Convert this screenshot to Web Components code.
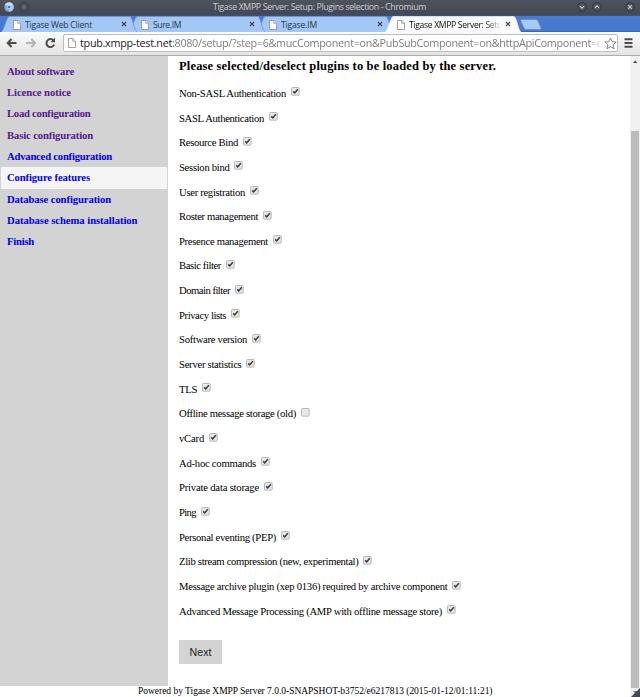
<!DOCTYPE html>
<html lang="en"><head><meta charset="utf-8"><title>Tigase XMPP Server: Setup: Plugins selection</title>
<style>html,body{margin:0;height:100%;overflow:hidden;background:#fff}</style></head>
<body>
<browser-window></browser-window>
<script>
const define = (name, html, setup) => customElements.define(name, class extends HTMLElement {
  connectedCallback() {
    if (this.shadowRoot) return;
    const t = document.createElement('template');
    t.innerHTML = html;
    this.attachShadow({mode: 'open'}).append(t.content.cloneNode(true));
    if (setup) setup.call(this, this.shadowRoot);
  }
});

// A single line of text, tracked so that it fills the width given in "w".
define('fit-text', `<style>:host{display:inline-block;white-space:pre;flex:none}span{display:inline-block}</style><span><slot></slot></span>`, function (r) {
  const w = +this.getAttribute('w'), s = r.querySelector('span');
  const n = this.textContent.length;
  s.style.letterSpacing = (w - s.getBoundingClientRect().width) / n + 'px';
  this.style.width = w + 'px';
});

define('page-icon', `<style>:host{display:block;flex:none;width:8px;height:10px}svg{display:block;width:100%;height:100%}</style>
<svg viewBox="0 0 8 10"><path d="M.5.5H4.8L7.5 3.2V9.5H.5Z" fill="#fff" stroke="#8b8b8b" stroke-width=".8"/><path d="M4.8.5V3.2H7.5" fill="#eee" stroke="#8b8b8b" stroke-width=".8"/></svg>`);

define('window-button', `<style>:host{display:block;width:10px;height:10px}svg{display:block}</style>
<svg width="10" height="10" viewBox="0 0 10 10"><circle cx="5" cy="5" r="4.2" fill="#525661" stroke="#30333c"/><path fill="none" stroke="#c5c9d0" stroke-width="1.1"/></svg>`, function (r) {
  r.querySelector('path').setAttribute('d', {
    down: 'M3 4.2 5 6.2 7 4.2', up: 'M3 5.8 5 3.8 7 5.8', close: 'M3.2 3.2 6.8 6.8M6.8 3.2 3.2 6.8', dot: 'M4.5 5H5.5'
  }[this.getAttribute('kind')]);
});

define('title-bar', `<style>
:host{display:flex;box-sizing:border-box;height:16px;padding:2px 19px 0 4px;background:linear-gradient(#4f535e,#444852 85%,#3d5275);font:8.8px/11px "Open Sans",sans-serif;color:#c9ccd1}
.logo{width:10px;height:10px;margin-right:5px}.t{margin-left:184px}.b{display:flex;margin:0 -14px 0 auto}
.b window-button{margin-left:5px}.b window-button:last-child{margin-left:23px}
</style>
<svg class="logo" viewBox="0 0 10 10"><circle cx="5" cy="5" r="4.8" fill="#79a9df"/><path d="M.7 2.9A4.8 4.8 0 0 1 9.4 3.2L5 3Z" fill="#c4dcf7"/><path d="M5 9.8A4.8 4.8 0 0 0 9.3 3H5Z" fill="#a5c9f1"/><circle cx="5" cy="5" r="2.2" fill="#edf5ff"/><circle cx="5" cy="5" r="1.6" fill="#3978c5"/></svg>
<window-button kind="dot"></window-button>
<fit-text class="t" w="213">Tigase XMPP Server: Setup: Plugins selection - Chromium</fit-text>
<div class="b"><window-button kind="down"></window-button><window-button kind="up"></window-button><window-button kind="close"></window-button></div>`);

define('browser-tab', `<style>
:host{display:block;position:relative;width:128px;height:16px;flex:none;font:8.6px/12px "Open Sans",sans-serif;color:#263850}
:host([active]){color:#111}
.bg{position:absolute;left:0;top:0;overflow:visible}
.row{position:relative;display:flex;align-items:center;height:15px;padding:1px 0 0 11px;gap:4px}
.x{position:absolute;left:118.5px;top:5px}
.label{width:93px;overflow:hidden;height:12px}
:host([active]) .label{-webkit-mask:linear-gradient(90deg,#000 82%,transparent);mask:linear-gradient(90deg,#000 82%,transparent)}
</style>
<svg class="bg" width="136" height="16" viewBox="0 0 136 16"><path class="s" d="M-1 16C2 15 4 2 7 .5H128C131 2 132 14 135 16"/></svg>
<div class="row"><page-icon></page-icon><div class="label"><slot></slot></div>
<svg class="x" width="6" height="6" viewBox="0 0 6 6"><path d="M1 1 5 5M5 1 1 5" stroke="#404854" stroke-width="1.2"/></svg></div>`, function (r) {
  const a = this.hasAttribute('active'), s = r.querySelector('.s');
  s.setAttribute('fill', a ? '#fbfbfb' : '#a3c8f5');
  s.setAttribute('stroke', a ? '#e5ecf5' : '#688fca');
  s.setAttribute('stroke-width', '.7');
});

define('tab-strip', `<style>:host{display:flex;height:16px;padding-left:2px;background:linear-gradient(#4b7bd0,#4777cb);box-shadow:inset 0 -1px #3b67b5}
browser-tab:nth-of-type(1){z-index:3}browser-tab:nth-of-type(2){z-index:2}browser-tab:nth-of-type(3){z-index:1}browser-tab[active]{z-index:4}
svg{display:block;margin:3px 0 0 6px}</style>
<browser-tab><fit-text w="67">Tigase Web Client</fit-text></browser-tab>
<browser-tab><fit-text w="28">Sure.IM</fit-text></browser-tab>
<browser-tab><fit-text w="36">Tigase.IM</fit-text></browser-tab>
<browser-tab active><fit-text w="93">Tigase XMPP Server: Setu</fit-text></browser-tab>
<svg width="22" height="11" viewBox="0 0 22 11"><path d="M1.5.5H16Q17.5.5 18 2L21 9Q21.5 10.5 20 10.5H6Q4.500 10.500 4 9L.8 2Q.4.5 1.500.5Z" fill="#a6cbf7" stroke="#5f8dd4" stroke-width=".7"/></svg>`);

define('tool-bar', `<style>
:host{display:flex;align-items:center;box-sizing:border-box;height:24px;padding:0 6px 1px 6px;background:linear-gradient(#fafafa,#e4e4e4);border-bottom:1px solid #acacac}
.nav{flex:none}.url{display:flex;align-items:center;box-sizing:border-box;width:555px;height:18px;margin-left:6px;padding-left:4px;background:#fff;border:1px solid #bdbdbd;border-radius:2px;font:10.8px/16px "Open Sans",sans-serif;color:#7d7d7d}
page-icon{margin-right:4px}.h{color:#1a1a1a}.p{width:431px;overflow:hidden;white-space:nowrap;-webkit-mask:linear-gradient(90deg,#000 97%,transparent);mask:linear-gradient(90deg,#000 97%,transparent)}
.star{margin-left:1px;flex:none}.menu{margin-left:6px;flex:none}
</style>
<svg class="nav" width="51" height="14" viewBox="0 0 51 14" fill="none" stroke-width="2"><path d="M10.500 7H2M5.500 3 1.700 7 5.500 11" stroke="#4d4d4d"/><path d="M20 7H28.500M25.300 3 29.100 7 25.300 11" stroke="#b4b4b4"/><path d="M47.500 4.500A4 4 0 1 0 48.200 8.500" stroke="#4d4d4d"/><path d="M49 1.800V6.300H44.500Z" fill="#4d4d4d"/></svg>
<div class="url"><page-icon></page-icon><fit-text class="h" w="92">tpub.xmpp-test.net</fit-text><div class="p"><fit-text w="431">:8080/setup/?step=6&amp;mucComponent=on&amp;PubSubComponent=on&amp;httpApiComponent=o</fit-text></div>
<svg class="star" width="13" height="13" viewBox="0 0 13 13"><path d="M6.500.9 8.100 4.700 12.200 5 9.100 7.700 10.100 11.800 6.500 9.600 2.900 11.800 3.900 7.700.8 5 4.900 4.700Z" fill="#fff" stroke="#858585"/></svg></div>
<svg class="menu" width="9" height="10" viewBox="0 0 9 10"><path d="M.5 1.200H8.500M.5 5H8.500M.5 8.800H8.500" stroke="#4c4c4c" stroke-width="2"/></svg>`);

define('nav-item', `<style>
:host{display:block;box-sizing:border-box;height:21.33px;margin:0 1px;padding:4px 0 0 6px;font:bold 10.67px/12px "Liberation Serif",serif;color:#00e}
:host([visited]){color:#551a8b}:host([current]){background:#f5f5f5}</style><slot></slot>`);

define('side-nav', `<style>:host{display:block;box-sizing:border-box;width:168px;height:629.5px;padding-top:4.600px;background:#d3d3d3}</style>`, function (r) {
  for (const [t, w, a] of [['About software', 67, 'visited'], ['Licence notice', 64, 'visited'], ['Load configuration', 83.5, 'visited'], ['Basic configuration', 86, 'visited'],
    ['Advanced configuration', 105], ['Configure features', 83, 'current'], ['Database configuration', 104], ['Database schema installation', 130.5], ['Finish', 27]]) {
    const e = document.createElement('nav-item');
    if (a) e.setAttribute(a, '');
    e.innerHTML = `<fit-text w="${w}">${t}</fit-text>`;
    r.append(e);
  }
});

define('plugin-option', `<style>
:host{display:flex;height:24.67px;font:10.67px/12px "Liberation Serif",serif;color:#000}
svg{display:block;margin:.6px 0 0 4.500px}</style><slot></slot>
<svg width="9" height="9" viewBox="0 0 9 9"><rect x=".5" y=".5" width="7.700" height="7.700" rx="1" fill="#e7e7e7" stroke="#b8b8b8"/><path class="c" d="M2.200 4.400 3.700 5.900 6.800 2.200" fill="none" stroke="#3c3c3c" stroke-width="1.500"/></svg>`, function (r) {
  if (this.hasAttribute('off')) r.querySelector('.c').remove();
});

define('plugin-form', `<style>
:host{display:block;padding:2.500px 0 0 11px}
h3{margin:0 0 14.400px;font:bold 12.500px/14px "Liberation Serif",serif;color:#000}
button{display:block;box-sizing:border-box;width:43px;height:24px;margin-top:10.600px;padding:0;border:0;background:#d3d3d3;color:#222;font:10.67px/24px "Liberation Sans",sans-serif}
</style><h3><fit-text w="317">Please selected/deselect plugins to be loaded by the server.</fit-text></h3><div></div><button><fit-text w="22">Next</fit-text></button>`, function (r) {
  const list = r.querySelector('div');
  for (const [t, end] of [['Non-SASL Authentication', 286], ['SASL Authentication', 264], ['Resource Bind', 238], ['Session bind', 229.5], ['User registration', 245], ['Roster management', 258], ['Presence management', 268], ['Basic filter', 221], ['Domain filter', 230], ['Privacy lists', 226], ['Software version', 247], ['Server statistics', 241.5], ['TLS', 197], ['Offline message storage (old)', 296], ['vCard', 204], ['Ad-hoc commands', 256], ['Private data storage', 259], ['Ping', 196], ['Personal eventing (PEP)', 276], ['Zlib stream compression (new, experimental)', 358.500], ['Message archive plugin (xep 0136) required by archive component', 447.500], ['Advanced Message Processing (AMP with offline message store)', 442]]) {
    const e = document.createElement('plugin-option');
    if (t.startsWith('Offline')) e.setAttribute('off', '');
    e.innerHTML = `<fit-text w="${end - 179}">${t}</fit-text>`;
    list.append(e);
  }
});

define('scroll-bar', `<style>:host{display:flex;flex-direction:column;width:10px;background:#f1f1f1}
.up,.down{display:block;flex:none}i{display:block;width:8px;height:557px;margin:64px 0 0 1px;background:#bcbcbc}</style>
<svg class="up" width="10" height="11" viewBox="0 0 10 11"><path d="M3 7H7.500L5.200 4.500Z" fill="#505050"/></svg><i></i>
<svg class="down" width="10" height="9" viewBox="0 0 10 9"><path d="M3 3H8L5.500 6Z" fill="#777"/><path d="M10 0V9H1Z" fill="#444a55"/></svg>`);

define('browser-window', `<style>
:host{display:flex;flex-direction:column;width:640px;height:697px;background:#fff}
.body{display:flex;height:641px}.page{width:630px}.cols{display:flex;height:629.5px}
footer{display:flex;padding-left:138px;font:9.500px/11px "Liberation Serif",serif;color:#000}
</style><title-bar></title-bar><tab-strip></tab-strip><tool-bar></tool-bar>
<div class="body"><div class="page"><div class="cols"><side-nav></side-nav><plugin-form></plugin-form></div>
<footer><fit-text w="354.500">Powered by Tigase XMPP Server 7.0.0-SNAPSHOT-b3752/e6217813 (2015-01-12/01:11:21)</fit-text></footer></div><scroll-bar></scroll-bar></div>`);
</script></body></html>
